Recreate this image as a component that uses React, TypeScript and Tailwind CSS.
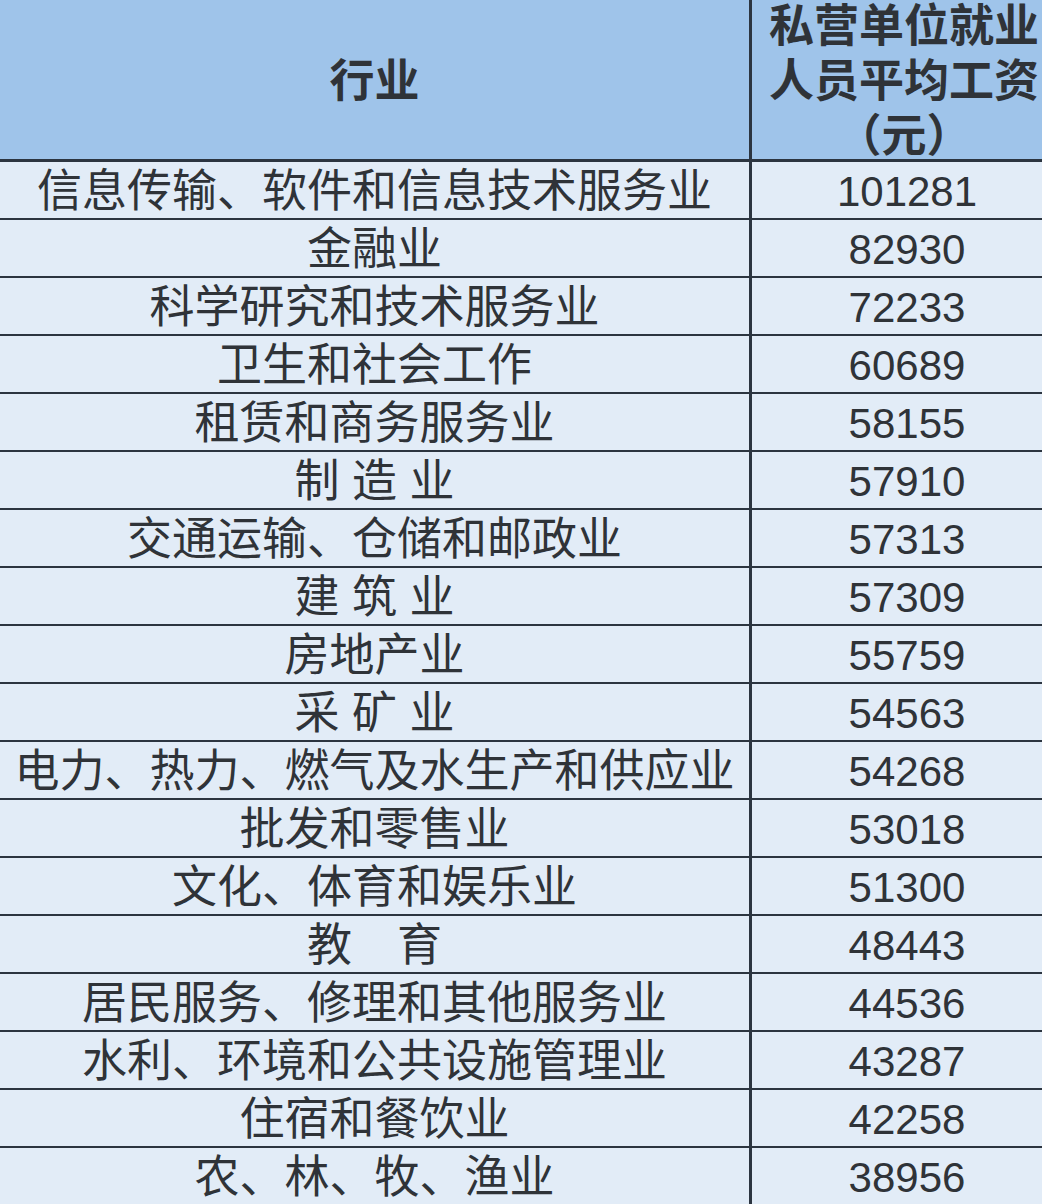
const rows: [string, string][] = [
  ["信息传输、软件和信息技术服务业", "101281"],
  ["金融业", "82930"],
  ["科学研究和技术服务业", "72233"],
  ["卫生和社会工作", "60689"],
  ["租赁和商务服务业", "58155"],
  ["制 造 业", "57910"],
  ["交通运输、仓储和邮政业", "57313"],
  ["建 筑 业", "57309"],
  ["房地产业", "55759"],
  ["采 矿 业", "54563"],
  ["电力、热力、燃气及水生产和供应业", "54268"],
  ["批发和零售业", "53018"],
  ["文化、体育和娱乐业", "51300"],
  ["教\u3000育", "48443"],
  ["居民服务、修理和其他服务业", "44536"],
  ["水利、环境和公共设施管理业", "43287"],
  ["住宿和餐饮业", "42258"],
  ["农、林、牧、渔业", "38956"],
];

export default function App() {
  return (
    <div
      className="w-[1042px] h-[1204px] overflow-hidden bg-[#e2ecf7] text-[#2f3338]"
      style={{ fontFamily: '"Liberation Sans", "Noto Sans CJK SC", sans-serif' }}
    >
      <div className="grid grid-cols-[752px_290px]">
        {/* header */}
        <div className="h-[162px] bg-[#9fc4ea] border-r-[3px] border-b-[3px] border-[#2c3540] flex items-center justify-center text-[45px] font-bold pt-[4px]">
          行业
        </div>
        <div className="h-[162px] bg-[#9fc4ea] border-b-[3px] border-[#2c3540] flex flex-col items-center justify-center text-[45px] font-bold leading-[55px] pl-[14px] pt-[4px]">
          <span>私营单位就业</span>
          <span>人员平均工资</span>
          <span>（元）</span>
        </div>

        {rows.map(([name, value]) => (
          <>
            <div
              key={name}
              className="h-[58px] border-r-[3px] border-b-2 border-[#2c3540] flex items-center justify-center text-[45px] whitespace-pre leading-none pt-[3px]"
            >
              {name}
            </div>
            <div
              key={name + "v"}
              className="h-[58px] border-b-2 border-[#2c3540] flex items-center justify-center text-[42px] leading-none pl-[20px] pt-[3px]"
            >
              {value}
            </div>
          </>
        ))}
      </div>
    </div>
  );
}
